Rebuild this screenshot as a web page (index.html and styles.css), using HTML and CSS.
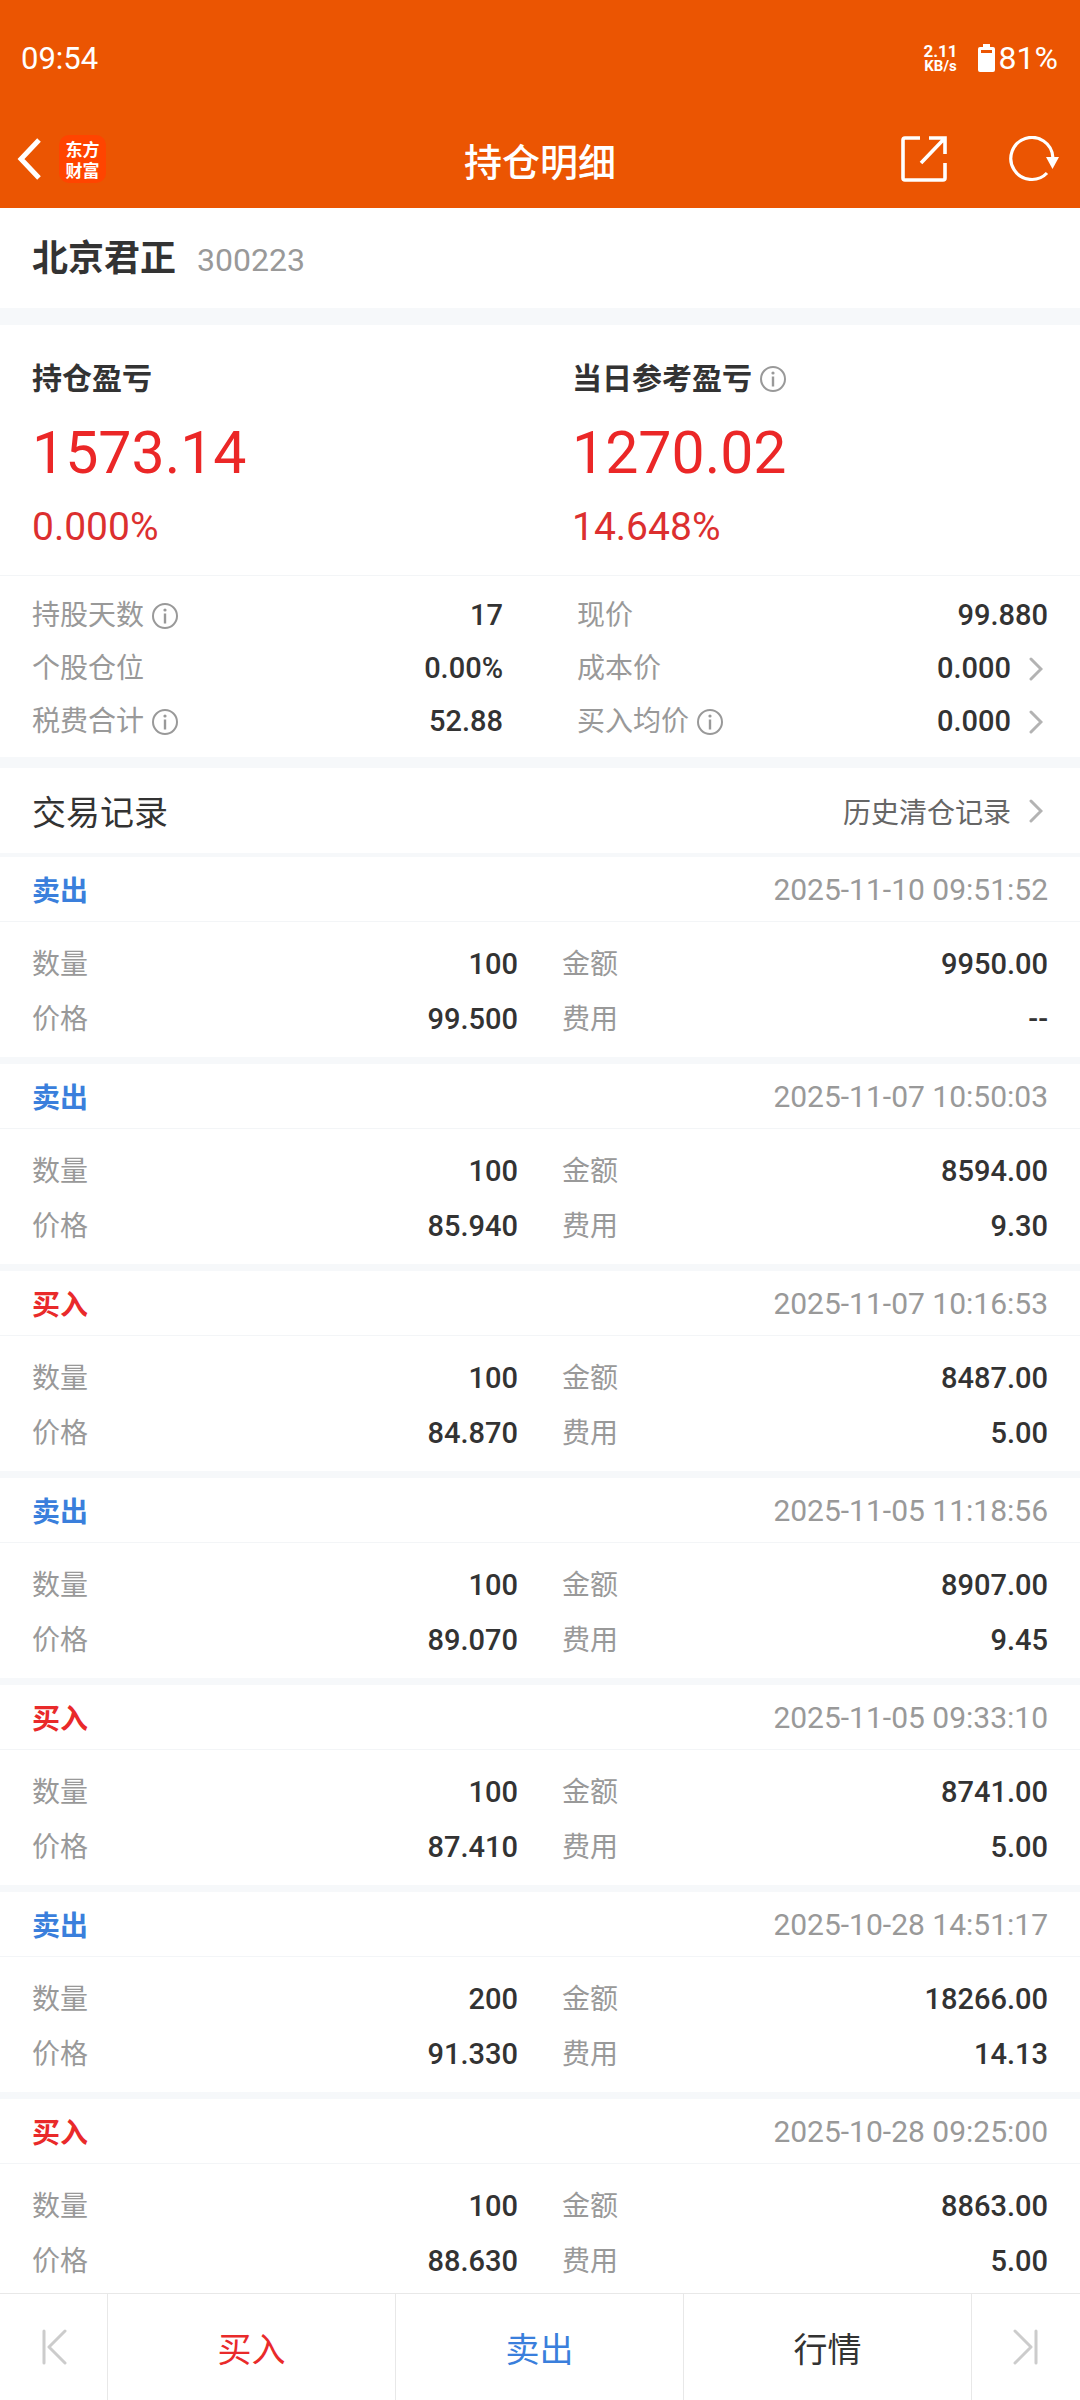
FILE: index.html
```html
<!DOCTYPE html>
<html lang="zh-CN">
<head>
    <meta charset="UTF-8">
    <meta name="viewport" content="width=device-width, initial-scale=1.0">
    <title>持仓明细</title>
    <link rel="stylesheet" href="styles.css">
</head>
<body>
    <svg class="defs" aria-hidden="true">
        <symbol id="info" viewBox="0 0 26 26">
            <circle cx="13" cy="13" r="12" fill="none" stroke="#999" stroke-width="2"/>
            <circle cx="13" cy="7" r="1.6" fill="#999"/>
            <path d="M13 10.5v10" stroke="#999" stroke-width="2.4"/>
        </symbol>
        <symbol id="arrow" viewBox="0 0 14 24">
            <path d="M2 2l10 10L2 22" fill="none" stroke="#b3b3b3" stroke-width="3" stroke-linecap="round"/>
        </symbol>
    </svg>
    <div class="app">
        <header class="header">
            <div class="status">
                <span class="time">09:54</span>
                <span class="speed"><b>2.11</b><b class="unit">KB/s</b></span>
                <svg class="battery" width="17" height="28" viewBox="0 0 17 28">
                    <path d="M5 0h7v3h3a2 2 0 0 1 2 2v21a2 2 0 0 1-2 2H2a2 2 0 0 1-2-2V5a2 2 0 0 1 2-2h3z" fill="#fff"/>
                    <path d="M3 6h11v3H3z" fill="#eb5502"/>
                </svg>
                <span>81%</span>
            </div>
            <div class="bar">
                <button class="icon-btn" aria-label="返回">
                    <svg width="24" height="42" viewBox="0 0 24 42">
                        <path d="M22 2L4 21l18 19" fill="none" stroke="#fff" stroke-width="5"/>
                    </svg>
                </button>
                <span class="logo">东方<br>财富</span>
                <h1>持仓明细</h1>
                <button class="icon-btn share" aria-label="分享">
                    <svg width="46" height="46" viewBox="0 0 46 46" fill="none" stroke="#fff" stroke-width="3.6">
                        <path d="M19 2H4a2 2 0 0 0-2 2v38a2 2 0 0 0 2 2h38a2 2 0 0 0 2-2V27"/>
                        <path d="M28 2h16v16M43 3L20 27"/>
                    </svg>
                </button>
                <button class="icon-btn" aria-label="刷新">
                    <svg width="50" height="46" viewBox="0 0 50 46">
                        <path d="M38 37A21 21 0 1 1 43.8 21" fill="none" stroke="#fff" stroke-width="3.2"/>
                        <path d="M37 21h13l-6.5 12z" fill="#fff"/>
                    </svg>
                </button>
            </div>
        </header>

        <main class="content">
            <section class="stock">
                <h2>北京君正</h2>
                <span>300223</span>
            </section>

            <section class="profit">
                <div>
                    <h3>持仓盈亏</h3>
                    <p class="amount">1573.14</p>
                    <p class="rate">0.000%</p>
                </div>
                <div>
                    <h3>当日参考盈亏<svg class="info"><use href="#info"/></svg></h3>
                    <p class="amount">1270.02</p>
                    <p class="rate">14.648%</p>
                </div>
            </section>

            <dl class="details">
                <div><dt>持股天数<svg class="info"><use href="#info"/></svg></dt><dd>17</dd></div>
                <div><dt>现价</dt><dd>99.880</dd></div>
                <div><dt>个股仓位</dt><dd>0.00%</dd></div>
                <div><dt>成本价</dt><dd>0.000<svg class="arrow"><use href="#arrow"/></svg></dd></div>
                <div><dt>税费合计<svg class="info"><use href="#info"/></svg></dt><dd>52.88</dd></div>
                <div><dt>买入均价<svg class="info"><use href="#info"/></svg></dt><dd>0.000<svg class="arrow"><use href="#arrow"/></svg></dd></div>
            </dl>

            <section class="records-head">
                <h2>交易记录</h2>
                <a href="#">历史清仓记录<svg class="arrow"><use href="#arrow"/></svg></a>
            </section>
            <div id="records"></div>
        </main>

        <nav class="footer">
            <button aria-label="上一只">
                <svg width="26" height="36" viewBox="0 0 26 36" fill="none" stroke="#ccc" stroke-width="3" stroke-linecap="round" stroke-linejoin="round">
                    <path d="M3 2v32M24 2L8 18l16 16"/>
                </svg>
            </button>
            <button class="buy">买入</button>
            <button class="sell">卖出</button>
            <button>行情</button>
            <button aria-label="下一只">
                <svg width="26" height="36" viewBox="0 0 26 36" fill="none" stroke="#ccc" stroke-width="3" stroke-linecap="round" stroke-linejoin="round">
                    <path d="M23 2v32M2 2l16 16L2 34"/>
                </svg>
            </button>
        </nav>
    </div>
    <script>
        // type, time, quantity, amount, price, fee
        const records = [
            ['sell', '2025-11-10 09:51:52', '100', '9950.00', '99.500', '--'],
            ['sell', '2025-11-07 10:50:03', '100', '8594.00', '85.940', '9.30'],
            ['buy', '2025-11-07 10:16:53', '100', '8487.00', '84.870', '5.00'],
            ['sell', '2025-11-05 11:18:56', '100', '8907.00', '89.070', '9.45'],
            ['buy', '2025-11-05 09:33:10', '100', '8741.00', '87.410', '5.00'],
            ['sell', '2025-10-28 14:51:17', '200', '18266.00', '91.330', '14.13'],
            ['buy', '2025-10-28 09:25:00', '100', '8863.00', '88.630', '5.00']
        ];

        document.getElementById('records').innerHTML = records.map(([type, time, count, amount, price, fee]) => `
            <article class="record">
                <div class="record-title">
                    <strong class="${type}">${type === 'buy' ? '买入' : '卖出'}</strong>
                    <time>${time}</time>
                </div>
                <dl>
                    <div><dt>数量</dt><dd>${count}</dd></div>
                    <div><dt>金额</dt><dd>${amount}</dd></div>
                    <div><dt>价格</dt><dd>${price}</dd></div>
                    <div><dt>费用</dt><dd>${fee}</dd></div>
                </dl>
            </article>`).join('');
    </script>
</body>
</html>
```
FILE: styles.css
```css
* {
    box-sizing: border-box;
    margin: 0;
    padding: 0;
}
body {
    font-family: Roboto, "Noto Sans CJK SC", sans-serif;
    font-size: 28px;
    color: #333;
    background: #fff;
}
button {
    font: inherit;
    color: inherit;
    background: none;
    border: none;
    cursor: pointer;
}
.defs {
    display: none;
}
.app {
    display: flex;
    flex-direction: column;
    height: 100vh;
}

/* header */
.header {
    flex: none;
    background: #eb5502;
    color: #fff;
}
.status {
    display: flex;
    align-items: center;
    height: 110px;
    padding: 6px 22px 0 21px;
    font-size: 32px;
}
.time {
    flex: 1;
    font-size: 31px;
}
.speed {
    display: flex;
    flex-direction: column;
    align-items: center;
    margin-right: 20px;
    font-size: 17px;
    line-height: 16px;
}
.unit {
    font-size: 15px;
    line-height: 14px;
}
.battery {
    margin-right: 4px;
}
.bar {
    position: relative;
    display: flex;
    align-items: center;
    height: 98px;
    padding: 0 21px 0 17px;
}
.icon-btn {
    display: flex;
}
.logo {
    margin: 0 auto 0 18px;
    width: 47px;
    padding: 3px 0;
    border-radius: 10px;
    background: #ff4400;
    font-family: "Noto Sans CJK SC", sans-serif;
    font-size: 17px;
    font-weight: bold;
    line-height: 21px;
    text-align: center;
}
.bar h1 {
    position: absolute;
    left: 50%;
    transform: translateX(-50%);
    font-size: 38px;
    font-weight: 500;
}
.share {
    margin-right: 62px;
}

/* page */
.content {
    flex: 1;
    min-height: 0;
    overflow-y: auto;
    scrollbar-width: none;
}
.stock {
    display: flex;
    align-items: baseline;
    height: 117px;
    padding: 2px 32px 0;
    border-bottom: 17px solid #f6f8fa;
    line-height: 98px;
}
.stock h2 {
    margin-right: 21px;
    font-size: 36px;
    font-weight: bold;
}
.stock span {
    font-size: 32px;
    color: #999;
}
.info {
    width: 26px;
    height: 26px;
    margin-left: 8px;
}
.arrow {
    width: 14px;
    height: 24px;
    margin: 0 5px 0 18px;
}
.buy {
    color: #e92a2a;
}
.sell {
    color: #3a7fdc;
}

.profit {
    display: grid;
    grid-template-columns: 1fr 1fr;
    column-gap: 64px;
    padding: 32px 32px 26px;
    border-bottom: 1px solid #f3f5f7;
}
.profit h3 {
    display: flex;
    align-items: center;
    font-size: 30px;
    line-height: 44px;
}
.amount {
    margin: 17px 0;
    font-size: 59px;
    line-height: 70px;
    color: #eb2727;
}
.rate {
    font-size: 39px;
    line-height: 44px;
    color: #dc2f2f;
}

dl {
    display: grid;
    grid-template-columns: 1fr 1fr;
}
dl div {
    display: flex;
    justify-content: space-between;
}
dt, dd {
    display: flex;
    align-items: center;
}
dt {
    color: #999;
}
dd {
    font-size: 29px;
    font-weight: 500;
}
.details {
    column-gap: 74px;
    padding: 13px 32px 9px;
    border-bottom: 11px solid #f6f8fa;
    line-height: 53px;
}

/* trade records */
.records-head {
    display: flex;
    align-items: center;
    justify-content: space-between;
    height: 89px;
    padding: 0 32px;
    border-bottom: 4px solid #f6f8fa;
}
.records-head h2 {
    font-size: 34px;
    font-weight: normal;
}
.records-head a {
    display: flex;
    align-items: center;
    color: #666;
    text-decoration: none;
}
.record {
    border-bottom: 7px solid #f6f8fa;
}
.record-title {
    display: flex;
    align-items: center;
    justify-content: space-between;
    height: 65px;
    padding: 0 32px;
    border-bottom: 1px solid #f3f5f7;
}
.record-title time {
    font-size: 30px;
    color: #999;
}
.record dl {
    column-gap: 44px;
    padding: 15px 32px 10px;
    line-height: 55px;
}

/* bottom bar */
.footer {
    flex: none;
    display: grid;
    grid-template-columns: 108px 1fr 1fr 1fr 108px;
    height: 107px;
    border-top: 1px solid #e8e8e8;
    background: #fff;
    font-size: 34px;
}
.footer button {
    display: flex;
    align-items: center;
    justify-content: center;
    border-right: 1px solid #e8e8e8;
}
.footer button:last-child {
    border-right: none;
}
```
